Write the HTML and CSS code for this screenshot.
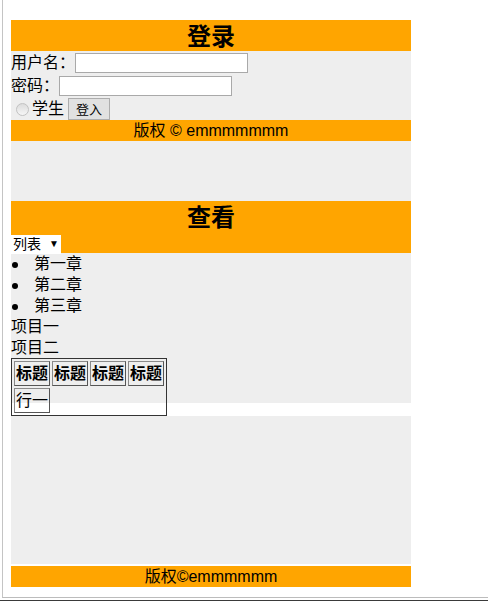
FILE: index.html
```html
<!DOCTYPE html>
<html lang="zh-CN">
<head>
    <meta charset="UTF-8">
    <meta name="viewport" content="width=device-width, initial-scale=1.0">
    <title>登录</title>
    <link rel="stylesheet" href="styles.css">
</head>
<body>
    <div class="frame">
        <div class="page">
            <div class="box login">
                <h2 class="bar title">登录</h2>
                <form class="form" onsubmit="return false">
                    <div class="row">
                        <label for="username">用户名：</label>
                        <input type="text" id="username">
                    </div>
                    <div class="row">
                        <label for="password">密码：</label>
                        <input type="password" id="password">
                    </div>
                    <div class="row">
                        <input type="radio" id="student" class="radio">
                        <label for="student">学生</label>
                        <button class="btn">登入</button>
                    </div>
                </form>
                <div class="bar foot">版权 © emmmmmmm</div>
            </div>

            <div class="box view">
                <div class="bar view-head">
                    <h2 class="title tall">查看</h2>
                    <span class="picker">
                        <select>
                            <option>列表</option>
                        </select>
                        <span class="arrow">▼</span>
                    </span>
                </div>
                <ul class="chapters">
                    <li>第一章</li>
                    <li>第二章</li>
                    <li>第三章</li>
                </ul>
                <div class="line">项目一</div>
                <div class="line">项目二</div>
                <table class="grid">
                    <tr>
                        <th>标题</th>
                        <th>标题</th>
                        <th>标题</th>
                        <th>标题</th>
                    </tr>
                    <tr>
                        <td>行一</td>
                    </tr>
                </table>
            </div>

            <div class="box content"></div>
            <div class="bar foot bottom">版权©emmmmmm</div>
        </div>
    </div>
    <div class="edge"></div>
</body>
</html>
```

FILE: styles.css
```css
* {
    margin: 0;
    padding: 0;
    box-sizing: border-box;
}

body {
    font-family: 'Liberation Sans', 'Noto Sans CJK SC', sans-serif;
    font-size: 16px;
    line-height: 21px;
    color: #000;
    background: #fff;
}

.frame {
    margin-left: 2px;
    height: 598px;
    border-left: 1px solid #c4c4c4;
    border-bottom: 1px solid #bcbcbc;
}

.edge {
    margin-top: 2px;
    height: 1px;
    background: #3a3a3a;
}

.page {
    padding: 20px 0 0 8px;
}

.box {
    width: 400px;
    background: #eeeeee;
}

.bar {
    background: #ffa500;
    text-align: center;
}

.title {
    font-size: 24px;
    font-weight: bold;
    line-height: 33px;
    height: 31px;
}

.login {
    height: 181px;
}

.row {
    display: flex;
    align-items: center;
    height: 23px;
}

.row input[type="text"],
.row input[type="password"] {
    width: 173px;
    height: 20px;
    border: 1px solid #a9a9a9;
    background: #fff;
}

.radio {
    appearance: none;
    width: 13px;
    height: 13px;
    margin: 2px 3px 0 5px;
    border: 1px solid #c2c2c2;
    border-radius: 50%;
    background: linear-gradient(#dcdcdc, #f6f6f6);
}

.btn {
    height: 22px;
    margin-left: 4px;
    padding: 0 7px;
    font-family: inherit;
    font-size: 13px;
    border: 1px solid #adadad;
    background: #e1e1e1;
}

.foot {
    line-height: 21px;
}

.view {
    height: 202px;
}

.view-head {
    height: 52px;
    text-align: left;
}

.tall {
    height: 32px;
    line-height: 34px;
    text-align: center;
}

.picker {
    display: inline-flex;
    align-items: center;
    width: 50px;
    height: 19px;
    margin-top: 1px;
    background: #fff;
}

.picker select {
    appearance: none;
    border: none;
    background: transparent;
    font-family: inherit;
    font-size: 14px;
    padding-left: 2px;
    width: 38px;
}

.arrow {
    font-size: 10px;
    line-height: 1;
}

.chapters {
    list-style: none;
}

.chapters li {
    display: flex;
    align-items: center;
    height: 21px;
}

.chapters li::before {
    content: "";
    width: 6px;
    height: 6px;
    margin: 3px 16px 0 1px;
    border-radius: 50%;
    background: #000;
}

.line {
    height: 21px;
}

.grid {
    border: 1px solid #333;
    border-spacing: 2px;
}

.grid th,
.grid td {
    padding: 1px;
    border: 1px solid #8a8a8a;
    border-right-color: #555;
    border-bottom-color: #555;
    line-height: 21px;
}

.grid th {
    font-weight: bold;
}

.content {
    margin-top: 13px;
    height: 148px;
}

.bottom {
    width: 400px;
    margin-top: 2px;
}
```
